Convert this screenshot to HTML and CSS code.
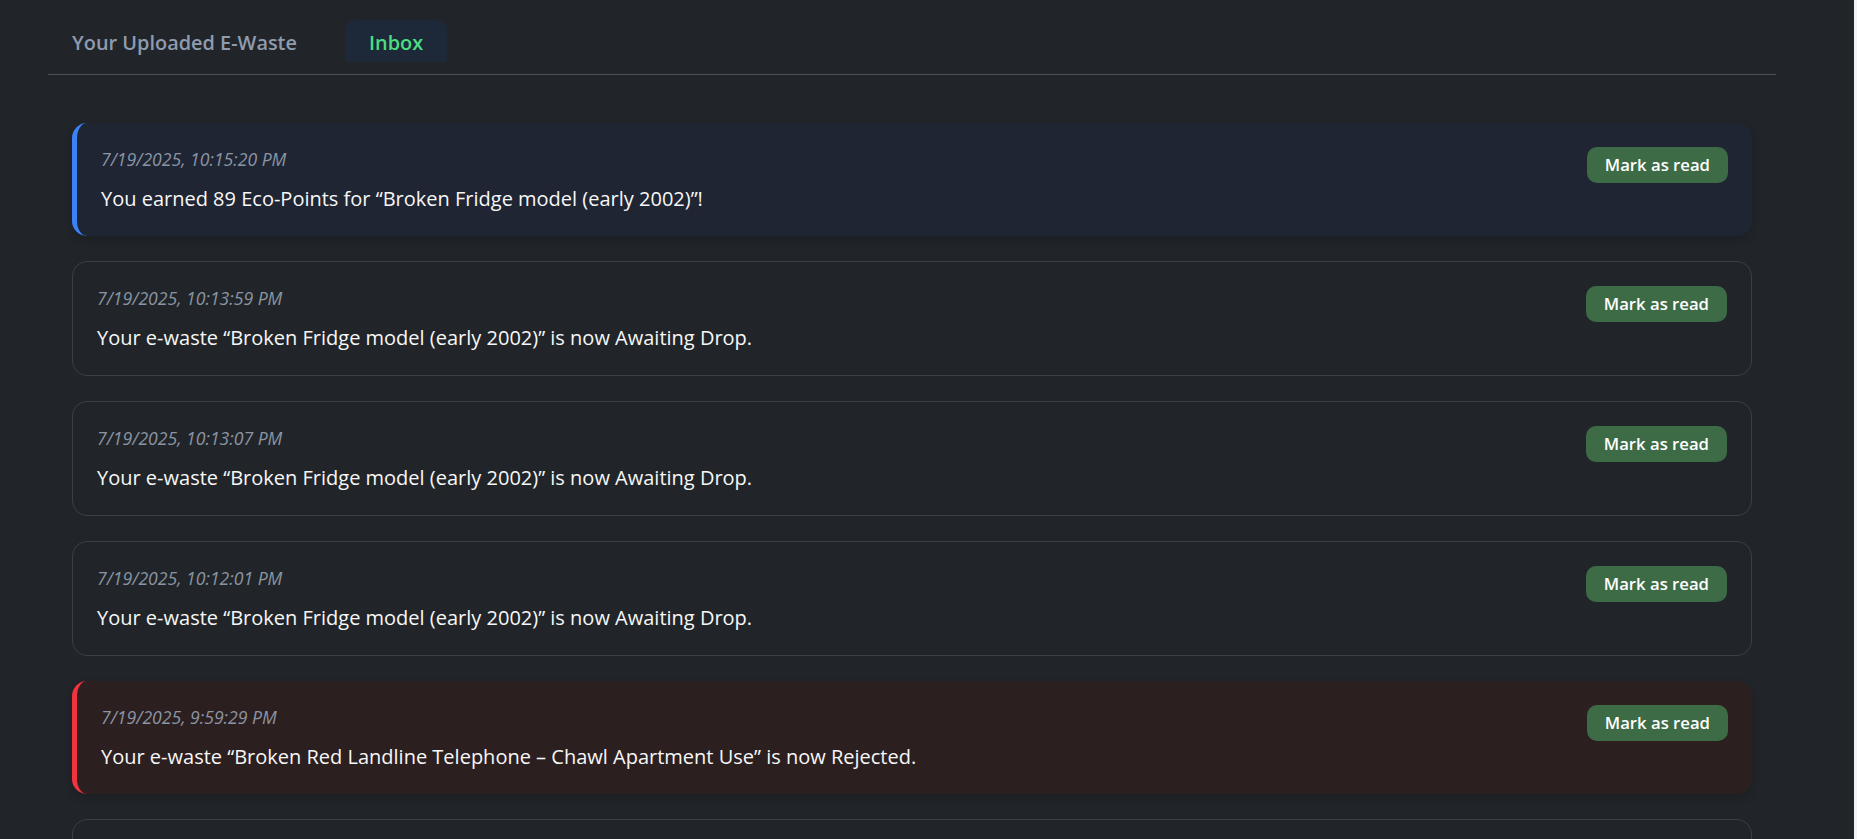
FILE: index.html
```html
<!DOCTYPE html>
<html lang="en">
<head>
<meta charset="utf-8">
<title>Inbox</title>
<link rel="stylesheet" href="styles.css">
</head>
<body>
<div class="page">
  <div class="panel">
    <nav class="tabs">
      <button class="tab">Your Uploaded E-Waste</button>
      <button class="tab tab-active">Inbox</button>
    </nav>
    <ul class="inbox">
      <li class="note note-points">
        <div class="note-body">
          <p class="note-time">7/19/2025, 10:15:20 PM</p>
          <p class="note-msg">You earned 89 Eco-Points for “Broken Fridge model (early 2002)”!</p>
        </div>
        <button class="mark-btn">Mark as read</button>
      </li>
      <li class="note">
        <div class="note-body">
          <p class="note-time">7/19/2025, 10:13:59 PM</p>
          <p class="note-msg">Your e-waste “Broken Fridge model (early 2002)” is now Awaiting Drop.</p>
        </div>
        <button class="mark-btn">Mark as read</button>
      </li>
      <li class="note">
        <div class="note-body">
          <p class="note-time">7/19/2025, 10:13:07 PM</p>
          <p class="note-msg">Your e-waste “Broken Fridge model (early 2002)” is now Awaiting Drop.</p>
        </div>
        <button class="mark-btn">Mark as read</button>
      </li>
      <li class="note">
        <div class="note-body">
          <p class="note-time">7/19/2025, 10:12:01 PM</p>
          <p class="note-msg">Your e-waste “Broken Fridge model (early 2002)” is now Awaiting Drop.</p>
        </div>
        <button class="mark-btn">Mark as read</button>
      </li>
      <li class="note note-rejected">
        <div class="note-body">
          <p class="note-time">7/19/2025, 9:59:29 PM</p>
          <p class="note-msg">Your e-waste “Broken Red Landline Telephone – Chawl Apartment Use” is now Rejected.</p>
        </div>
        <button class="mark-btn">Mark as read</button>
      </li>
      <li class="note">
        <div class="note-body">
          <p class="note-time">7/19/2025, 9:41:12 PM</p>
          <p class="note-msg">Your e-waste “Broken Red Landline Telephone – Chawl Apartment Use” is now Awaiting Drop.</p>
        </div>
        <button class="mark-btn">Mark as read</button>
      </li>
    </ul>
  </div>
</div>
</body>
</html>
```

FILE: styles.css
```css
html {
  background: #f3f3f3;
}

body {
  margin: 0;
  font-family: "Open Sans", "Noto Sans", sans-serif;
  color: #f3f4f6;
}

.page {
  margin-right: 3px;
  min-height: 100vh;
  background: #212529;
  padding: 20px 78px 40px 48px;
  box-sizing: border-box;
}

.panel {
  display: flex;
  flex-direction: column;
}

.tabs {
  display: flex;
  gap: 24px;
  padding-bottom: 12px;
  border-bottom: 1px solid #4b525c;
}

.tab {
  font-family: inherit;
  font-size: 19.9px;
  font-weight: 600;
  line-height: 32px;
  padding: 7px 24px 3px;
  border: none;
  background: transparent;
  color: #8f9bae;
  border-radius: 10px 10px 0 0;
  cursor: pointer;
}

.tab-active {
  background: #1d2838;
  color: #4ade80;
}

.inbox {
  list-style: none;
  margin: 48px 24px 0;
  padding: 0;
  display: flex;
  flex-direction: column;
  gap: 25px;
}

.note {
  display: flex;
  align-items: flex-start;
  justify-content: space-between;
  gap: 24px;
  padding: 24px 24px 22px;
  border: 1px solid #3b4048;
  border-radius: 15px;
  background: #212529;
}

.note-points {
  border: none;
  border-left: 5px solid #3b82f6;
  background: #1f2533;
  box-shadow: 0 4px 8px rgba(0, 0, 0, 0.18);
}

.note-rejected {
  border: none;
  border-left: 5px solid #ef3340;
  background: #2c1f20;
  box-shadow: 0 4px 8px rgba(0, 0, 0, 0.18);
}

.note-body {
  display: flex;
  flex-direction: column;
  gap: 12px;
}

.note-time {
  margin: 0;
  font-size: 17.6px;
  line-height: 25px;
  font-style: italic;
  color: #8b95a3;
}

.note-msg {
  margin: 0;
  font-size: 20px;
  line-height: 30px;
  color: #f7f7f7;
}

.mark-btn {
  flex: none;
  font-family: inherit;
  font-size: 16.7px;
  font-weight: 600;
  line-height: 26px;
  padding: 5px 18px;
  border: none;
  border-radius: 10px;
  background: #3d6b46;
  color: #ffffff;
  cursor: pointer;
}
```
